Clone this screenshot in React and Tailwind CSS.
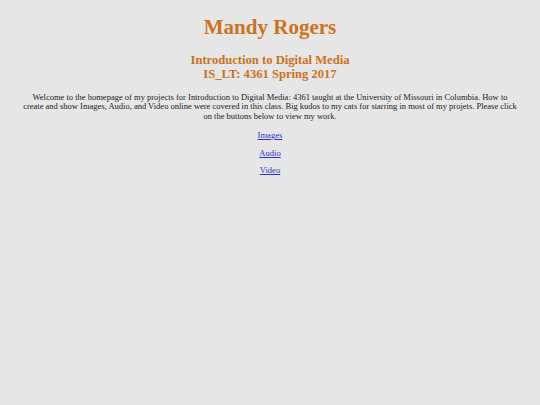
import React from 'react';

const links = ['Images', 'Audio', 'Video'];

const App = () => {
    return (
        <div className="min-h-screen bg-[#e6e6e6] text-center font-['Liberation_Serif',_'Times_New_Roman',_serif]">
            <div className="px-[23px] pt-[14px]">
                {/* Header */}
                <h1 className="text-[21px] leading-[26px] font-bold text-[#cc7220]">Mandy Rogers</h1>
                <h2 className="mt-[13px] text-[12.6px] leading-[14px] font-bold text-[#cc7220]">
                    Introduction to Digital Media<br />IS_LT: 4361 Spring 2017
                </h2>

                <p className="mt-[12px] text-[8.5px] leading-[9.4px] text-[#222]">
                    Welcome to the homepage of my projects for Introduction to Digital Media: 4361 taught at the University of Missouri in Columbia. How to create and show Images, Audio, and Video online were covered in this class. Big kudos to my cats for starring in most of my projets. Please click on the buttons below to view my work.
                </p>

                <div className="mt-[9px] flex flex-col items-center gap-[7.5px]">
                    {links.map(l => (
                        <a key={l} href="#" className="text-[8.6px] leading-[10px] text-[#3030d8] underline">{l}</a>
                    ))}
                </div>
            </div>
        </div>
    );
};

export default App;
